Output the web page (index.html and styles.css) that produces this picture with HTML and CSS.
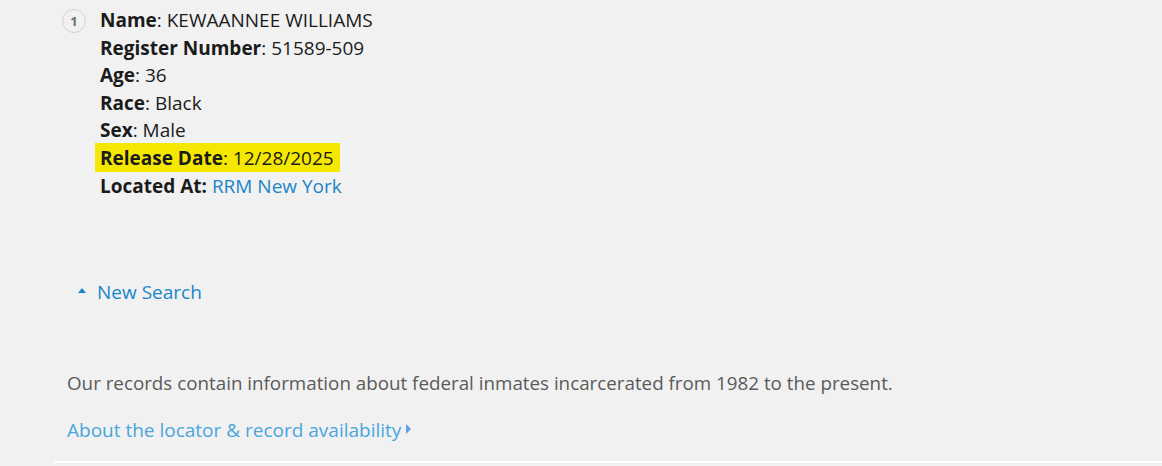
FILE: index.html
```html
<!DOCTYPE html>
<html>
<head>
<meta charset="utf-8">
<link rel="stylesheet" href="styles.css">
</head>
<body>
<div class="page">
  <ol class="results">
    <li class="result">
      <span class="num">1</span>
      <div class="details">
        <div class="row"><b>Name</b>: KEWAANNEE WILLIAMS</div>
        <div class="row"><b>Register Number</b>: 51589-509</div>
        <div class="row"><b>Age</b>: 36</div>
        <div class="row"><b>Race</b>: Black</div>
        <div class="row"><b>Sex</b>: Male</div>
        <div class="row"><span class="hl"><b>Release Date</b>: 12/28/2025</span></div>
        <div class="row"><b>Located At:</b> <a class="link" href="#">RRM New York</a></div>
      </div>
    </li>
  </ol>
  <div class="newsearch"><span class="up"></span><a class="link" href="#">New Search</a></div>
  <div class="footer">
    <p class="note">Our records contain information about federal inmates incarcerated from 1982 to the present.</p>
    <p class="about"><a href="#">About the locator &amp; record availability</a><span class="right"></span></p>
  </div>
  <div class="rule"></div>
</div>
</body>
</html>
```

FILE: styles.css
```css
html, body {
  margin: 0;
  padding: 0;
  background: #f1f1f1;
}
body {
  font-family: "Open Sans", "Noto Sans", sans-serif;
  color: #1b1b1b;
  font-size: 19px;
}
.page {
  height: 466px;
  display: flex;
  flex-direction: column;
}
.results {
  list-style: none;
  margin: 0;
  padding: 7px 0 0 62px;
}
.result {
  display: flex;
  gap: 14px;
}
.num {
  flex: none;
  width: 22px;
  height: 22px;
  margin-top: 2px;
  border: 1px solid #d2d2d2;
  border-radius: 50%;
  font-size: 13px;
  font-weight: 700;
  color: #6f6f6f;
  display: flex;
  align-items: center;
  justify-content: center;
}
.details {
  line-height: 27.6px;
}
.row b {
  font-weight: 700;
}
.hl {
  background: #f5e800;
  padding: 2px 6px 1px 5px;
  margin-left: -5px;
}
.link {
  color: #1a86c9;
  text-decoration: none;
}
.newsearch {
  margin: 79px 0 0 78px;
  display: flex;
  align-items: center;
  line-height: 26px;
}
.up {
  width: 0;
  height: 0;
  border-left: 4px solid transparent;
  border-right: 4px solid transparent;
  border-bottom: 5px solid #1a86c9;
  margin-right: 11px;
  margin-bottom: 4px;
}
.footer {
  padding-left: 67px;
  margin-top: 66px;
}
.note {
  margin: 0;
  color: #5a5a5a;
  font-size: 18.8px;
  line-height: 24px;
}
.about {
  margin: 23px 0 0;
  line-height: 24px;
  display: flex;
  align-items: center;
}
.about a {
  color: #4aa6dd;
  text-decoration: none;
}
.right {
  width: 0;
  height: 0;
  border-top: 5px solid transparent;
  border-bottom: 5px solid transparent;
  border-left: 5px solid #5aa2ef;
  margin-left: 5px;
  margin-bottom: 2px;
}
.rule {
  margin: auto 0 3px 54px;
  height: 2px;
  background: #ffffff;
}
```
